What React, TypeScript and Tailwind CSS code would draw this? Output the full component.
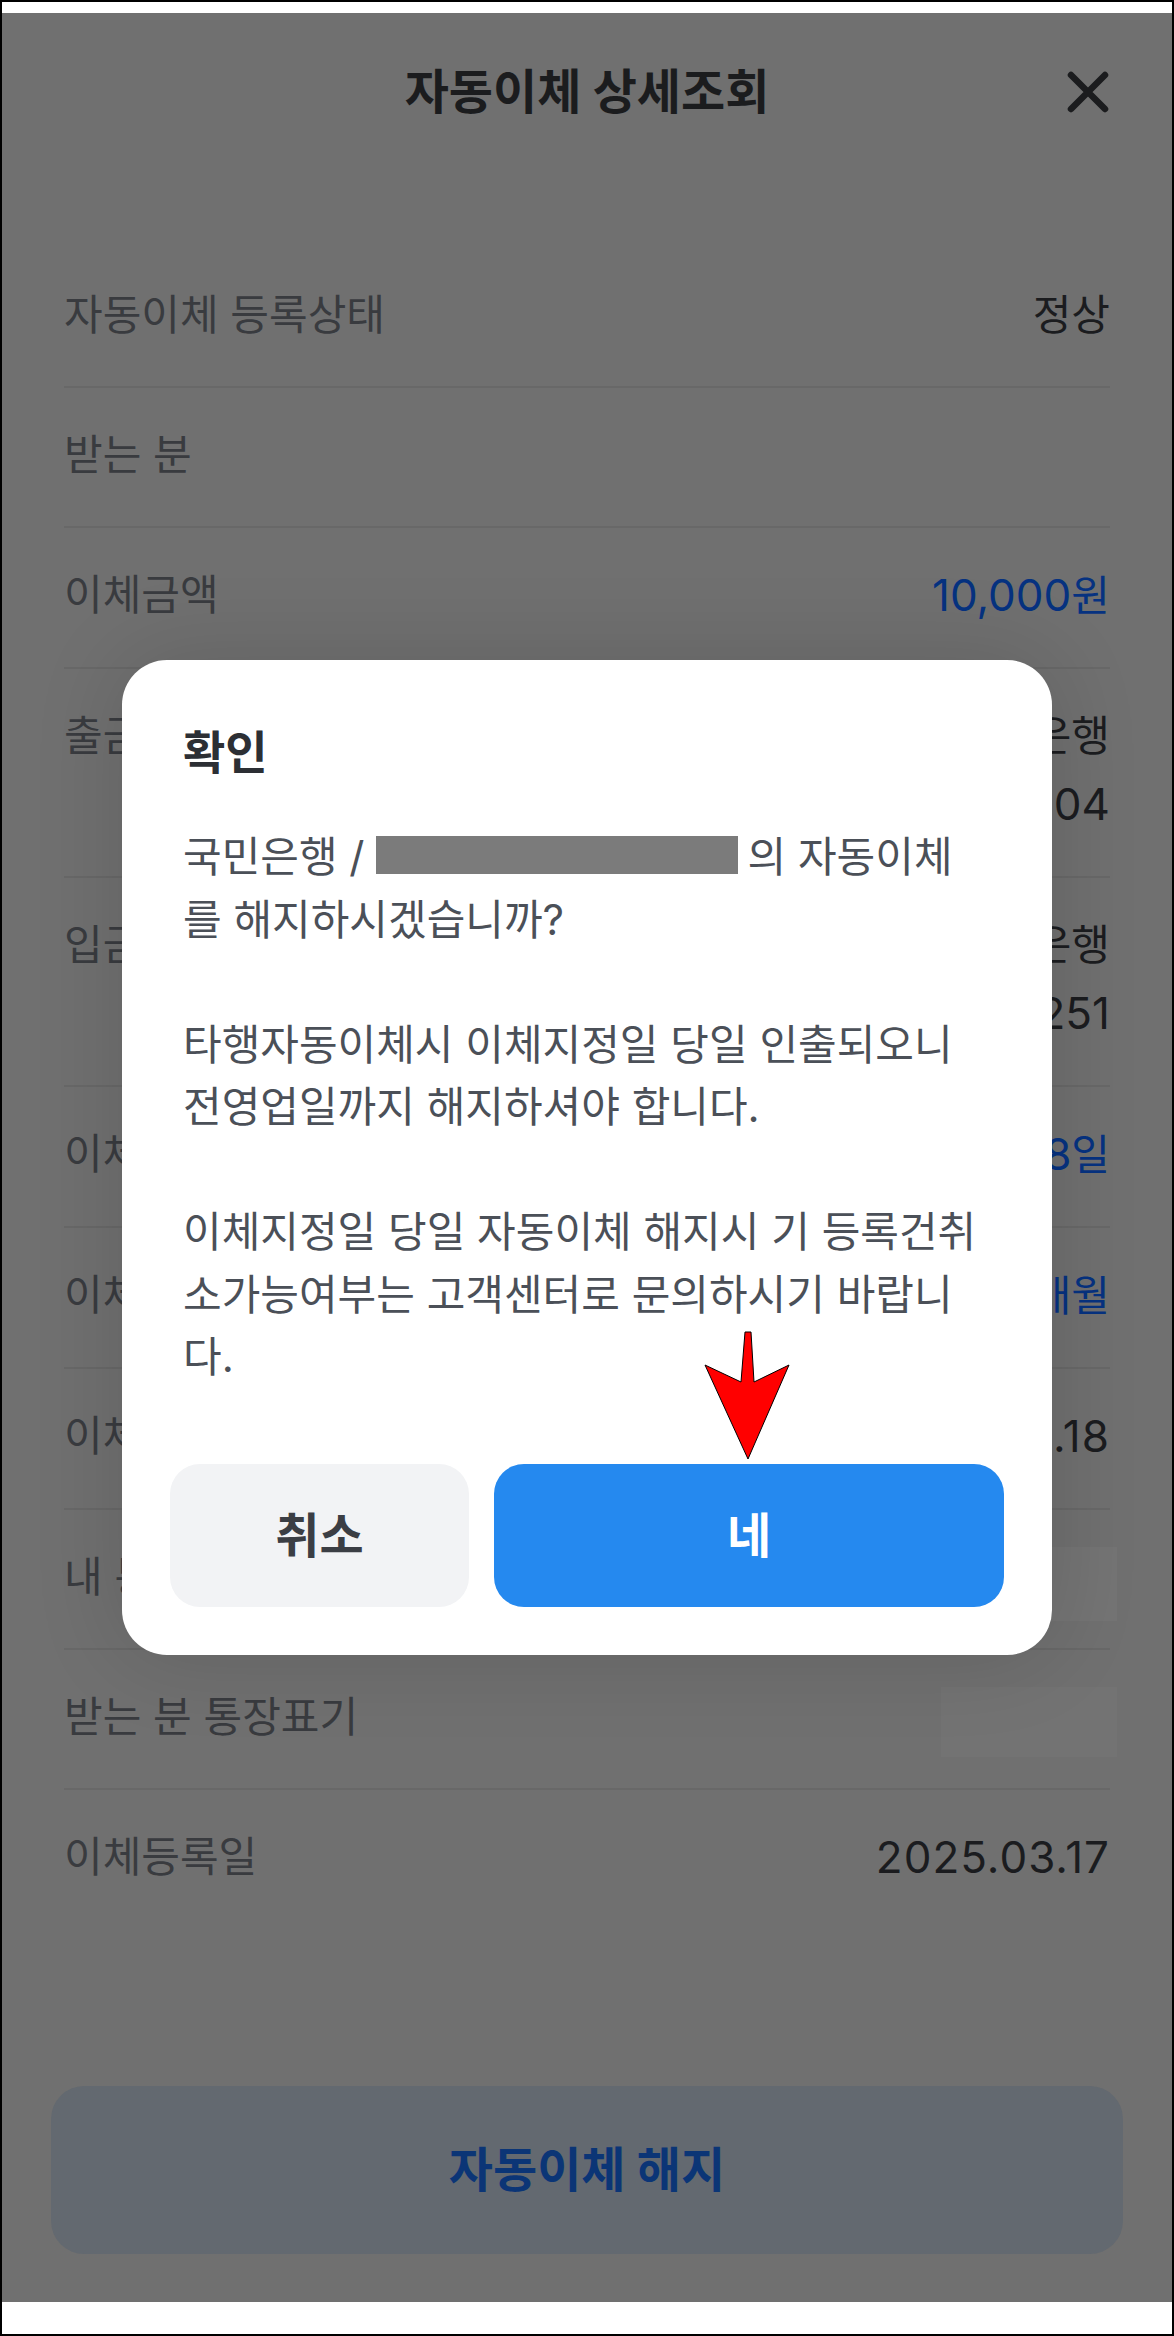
import type { ReactNode } from "react"

type DetailRow = {
  label: string
  values?: ReactNode[]
  blue?: boolean
  blur?: string
}

const rows: DetailRow[] = [
  { label: "자동이체 등록상태", values: ["정상"] },
  { label: "받는 분" },
  { label: "이체금액", values: [<><span className="text-[44px]">10,000</span>원</>], blue: true },
  { label: "출금계좌", values: ["국민은행", <span className="text-[44px]">123456-01-234004</span>] },
  { label: "입금계좌", values: ["신한은행", <span className="text-[44px]">110-482-771251</span>] },
  { label: "이체지정일", values: [<>매월 <span className="text-[44px]">18</span>일</>], blue: true },
  { label: "이체주기", values: [<><span className="text-[44px]">1</span>개월</>], blue: true },
  { label: "이체시작일", values: [<span className="text-[44px] tracking-[1px]">2025.03.18</span>] },
  { label: "내 통장표기", blur: "h-[74px] w-[175px] -mr-[7px] -mb-[14px] bg-[#747474]" },
  { label: "받는 분 통장표기", blur: "h-[70px] w-[176px] -mr-[7px] -mb-[10px] bg-[#737373]" },
  { label: "이체등록일", values: [<span className="text-[44px] tracking-[1px]">2025.03.17</span>] },
]

function CloseIcon() {
  return (
    <svg width="42" height="42" viewBox="0 0 42 42" fill="none">
      <path d="M4 4 L38 38 M38 4 L4 38" stroke="#1b1c1e" strokeWidth="6.5" strokeLinecap="round" />
    </svg>
  )
}

function Row({ row, last }: { row: DetailRow; last: boolean }) {
  const double = (row.values?.length ?? 0) > 1
  return (
    <div
      className={`flex items-start justify-between pt-[37px] pb-[41px] ${
        last ? "" : "border-b-2 border-[#686868]"
      }`}
    >
      <span className="text-[42px] leading-[60px] text-[#393b3f]">{row.label}</span>
      {row.values && (
        <div className={`flex flex-col items-end ${double ? "gap-[8px]" : ""}`}>
          {row.values.map((v, i) => (
            <span
              key={i}
              className={`text-[42px] leading-[60px] ${row.blue ? "text-[#063280]" : "text-[#1b1c1f]"}`}
            >
              {v}
            </span>
          ))}
        </div>
      )}
      {row.blur && <div className={row.blur} />}
    </div>
  )
}

function ConfirmDialog() {
  return (
    <div className="relative flex w-[930px] flex-col rounded-[45px] bg-white px-[48px] pt-[62px] pb-[48px] shadow-[0_0_90px_rgba(0,0,0,0.14)]">
      <h2 className="pl-[13px] text-[46px] font-bold leading-[60px] text-[#2c2f34]">확인</h2>

      <div className="mt-[44px] whitespace-nowrap pl-[13px] text-[42px] leading-[62.5px] text-[#4b5058]">
        <p>
          국민은행 /
          <span className="ml-[11px] mr-[10px] inline-block h-[38px] w-[362px] bg-[#7b7b7b] align-[-2px]" />
          의 자동이체
          <br />를 해지하시겠습니까?
        </p>
        <p className="mt-[62.5px]">
          타행자동이체시 이체지정일 당일 인출되오니
          <br />
          전영업일까지 해지하셔야 합니다.
        </p>
        <p className="mt-[62.5px]">
          이체지정일 당일 자동이체 해지시 기 등록건취
          <br />
          소가능여부는 고객센터로 문의하시기 바랍니
          <br />
          다.
        </p>
      </div>

      <div className="mt-[75.5px] flex gap-[25px]">
        <button className="h-[143px] w-[299px] rounded-[30px] bg-[#f2f3f5] text-[48px] font-bold text-[#3b3e44]">
          취소
        </button>
        <button className="h-[143px] flex-1 rounded-[30px] bg-[#2589ef] text-[48px] font-semibold text-white">
          네
        </button>
      </div>

      {/* annotation arrow */}
      <svg
        className="absolute left-[582px] top-[671px]"
        width="88"
        height="131"
        viewBox="0 0 88 131"
        fill="none"
      >
        <polygon
          points="41,1 47,1 50,51 85,34 44,128 1,34 37,51"
          fill="#ff0000"
          stroke="#000"
          strokeWidth="1"
          strokeLinejoin="miter"
        />
      </svg>
    </div>
  )
}

export default function App() {
  return (
    <div className="h-[2336px] w-[1174px] bg-black p-[2px] font-['Inter','Noto_Sans_CJK_KR',sans-serif]">
      <div className="flex h-full flex-col bg-white">
        <div className="h-[11px] shrink-0" />

        <main className="relative flex flex-1 flex-col bg-[#707070]">
          <header className="grid h-[158px] shrink-0 grid-cols-[1fr_auto_1fr] items-center px-[63px]">
            <div />
            <h1 className="text-[48px] font-bold text-[#1b1c1e]">자동이체 상세조회</h1>
            <div className="flex justify-end">
              <CloseIcon />
            </div>
          </header>

          <section className="mt-[77px] px-[62px]">
            {rows.map((row, i) => (
              <Row key={row.label} row={row} last={i === rows.length - 1} />
            ))}
          </section>

          <div className="mt-auto px-[49px] pb-[48px]">
            <button className="flex h-[168px] w-full items-center justify-center rounded-[33px] bg-[#636970] text-[48px] font-bold text-[#0b3576]">
              자동이체 해지
            </button>
          </div>

          {/* dimmed layer + dialog */}
          <div className="absolute inset-0 flex items-center justify-center">
            <ConfirmDialog />
          </div>
        </main>

        <div className="h-[32px] shrink-0" />
      </div>
    </div>
  )
}
